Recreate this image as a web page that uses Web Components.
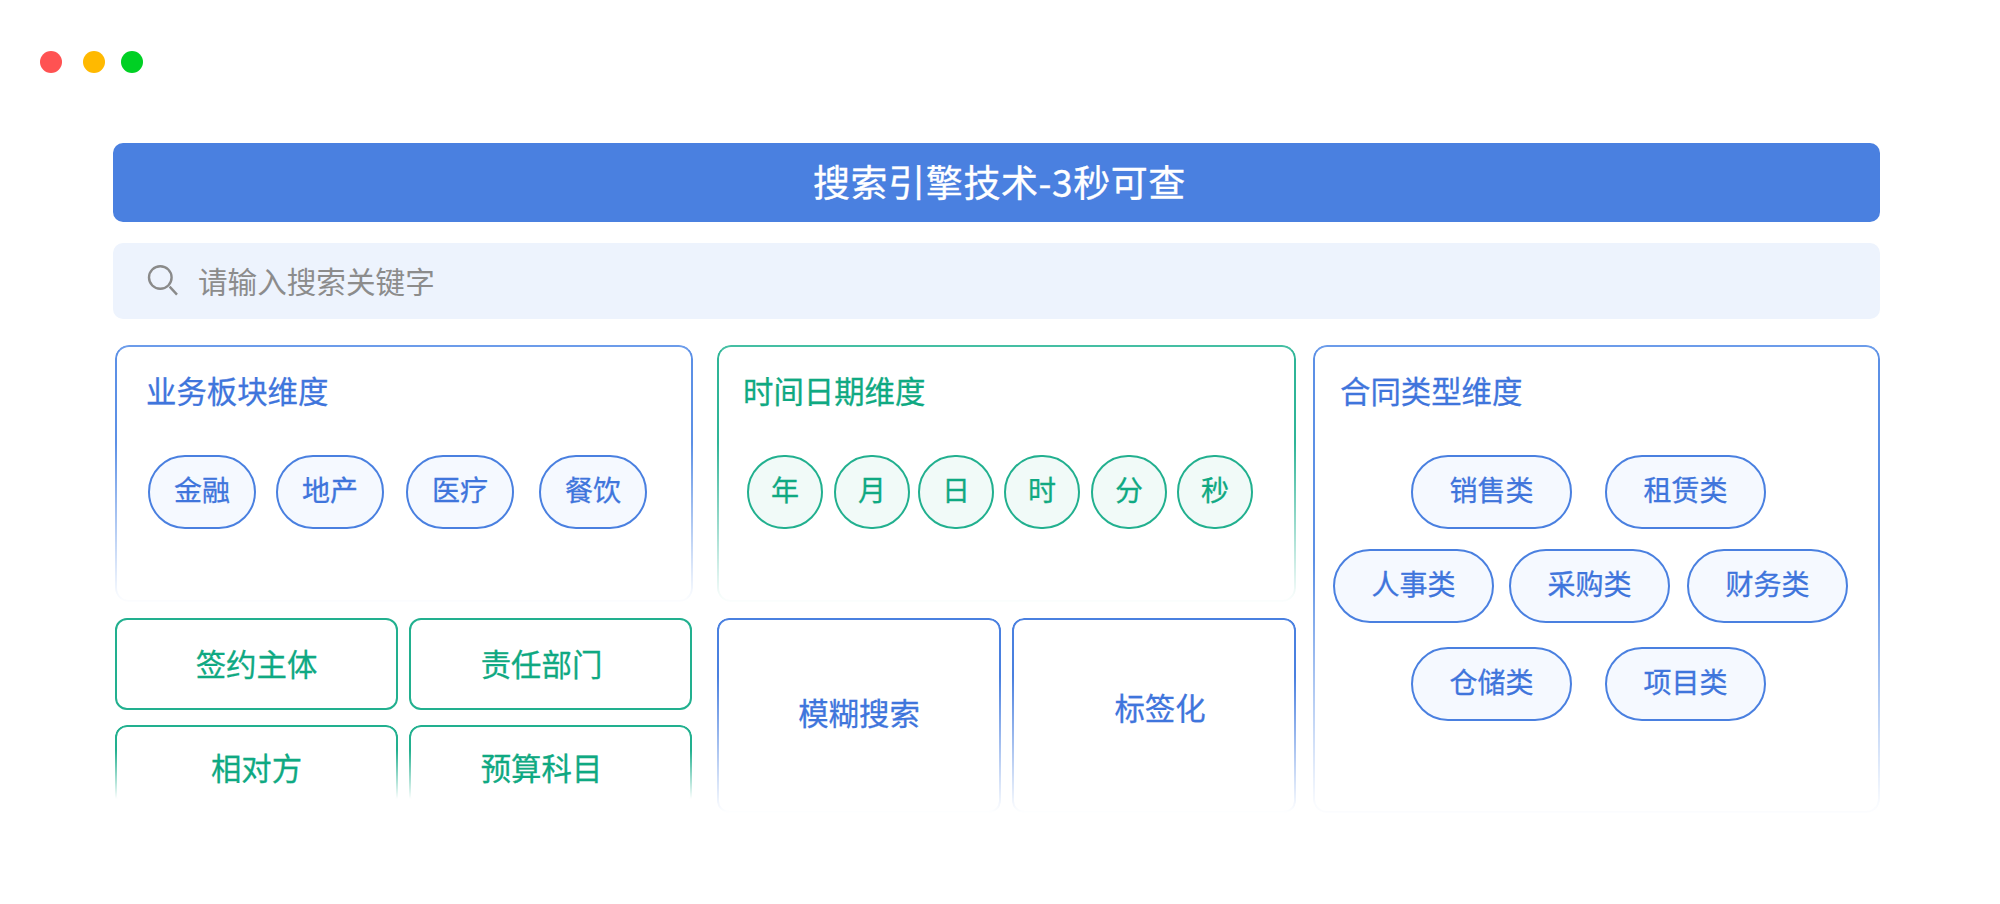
<!DOCTYPE html>
<html lang="zh">
<head>
<meta charset="utf-8">
<title>搜索引擎技术</title>
<style>
  html, body { margin: 0; background: #fff; }
  body {
    font-family: "Noto Sans CJK SC", "Noto Sans", sans-serif;
    width: 2000px;
    height: 904px;
    overflow: hidden;
  }
</style>
</head>
<body>

<search-page>
  <window-dots slot="dots"></window-dots>
  <title-bar slot="bar">搜索引擎技术-3秒可查</title-bar>
  <search-box slot="search">请输入搜索关键字</search-box>

  <dim-card slot="a" style="width:578px;height:257px;--pad:33px" heading="业务板块维度" tone="blue" head-left="31">
    <pill-row style="gap:20px">
      <tag-pill>金融</tag-pill>
      <tag-pill style="margin-right:2px">地产</tag-pill>
      <tag-pill style="margin-right:5px">医疗</tag-pill>
      <tag-pill>餐饮</tag-pill>
    </pill-row>
  </dim-card>
  <link-card slot="a1" tone="green" style="width:283px;height:92px;--pb:2px">签约主体</link-card>
  <link-card slot="a2" tone="green" style="width:283px;height:92px;--pb:2px;--pr:18px">责任部门</link-card>
  <link-card slot="a3" tone="green" fade style="width:283px;height:84px">相对方</link-card>
  <link-card slot="a4" tone="green" fade style="width:283px;height:84px;--pr:18px">预算科目</link-card>

  <dim-card slot="b" style="width:579px;height:257px;--pad:30px" heading="时间日期维度" tone="green" head-left="26">
    <pill-row>
      <tag-pill tone="green" round style="margin-right:11px">年</tag-pill>
      <tag-pill tone="green" round style="margin-right:8px">月</tag-pill>
      <tag-pill tone="green" round style="margin-right:10px">日</tag-pill>
      <tag-pill tone="green" round style="margin-right:11px">时</tag-pill>
      <tag-pill tone="green" round style="margin-right:10px">分</tag-pill>
      <tag-pill tone="green" round>秒</tag-pill>
    </pill-row>
  </dim-card>
  <link-card slot="b1" tone="blue" fade style="width:284px;height:195px;--pb:7px">模糊搜索</link-card>
  <link-card slot="b2" tone="blue" fade style="width:284px;height:195px;--pb:17px;--pl:12px">标签化</link-card>

  <dim-card slot="c" style="width:567px;height:468px;--pad:20px" heading="合同类型维度" tone="blue" head-left="27" slow>
    <pill-row style="gap:33px;margin-left:78px">
      <tag-pill wide>销售类</tag-pill>
      <tag-pill wide>租赁类</tag-pill>
    </pill-row>
    <pill-row style="margin-top:20px">
      <tag-pill wide style="margin-right:15px">人事类</tag-pill>
      <tag-pill wide style="margin-right:17px">采购类</tag-pill>
      <tag-pill wide>财务类</tag-pill>
    </pill-row>
    <pill-row style="gap:33px;margin-top:24px;margin-left:78px">
      <tag-pill wide>仓储类</tag-pill>
      <tag-pill wide>项目类</tag-pill>
    </pill-row>
  </dim-card>
</search-page>

<script>
// shared colours, picked off the reference
const tones = {
  blue: { ink: '#3f75dc', line: '#4a80e0', side: '#5c90e6', top: '#6c9cea', fill: '#f5f9ff' },
  green: { ink: '#0fa982', line: '#22b08f', side: '#2fb597', top: '#45bfa3', fill: '#f1faf8' }
};

function applyTone(el) {
  let t = tones[el.getAttribute('tone')] || tones.blue;
  el.style.setProperty('--ink', t.ink);
  el.style.setProperty('--line', t.line);
  el.style.setProperty('--side', t.side);
  el.style.setProperty('--top', t.top);
  el.style.setProperty('--fill', t.fill);
}

class SearchPage extends HTMLElement {
  connectedCallback() {
    this.attachShadow({ mode: 'open' }).innerHTML = `
      <style>
        :host { display: block; padding: 51px 120px 0 40px; }
        .main { margin: 70px 0 0 73px; width: 1767px; }
        .cols { display: flex; margin: 26px 0 0 2px; }
        .col { display: flex; flex-direction: column; }
        .two { display: flex; gap: 11px; margin-top: 16px; }
        .two.next { margin-top: 15px; }
        .b { margin-left: 24px; }
        .c { margin-left: 17px; }
      </style>
      <slot name="dots"></slot>
      <div class="main">
        <slot name="bar"></slot>
        <slot name="search"></slot>
        <div class="cols">
          <div class="col">
            <slot name="a"></slot>
            <div class="two"><slot name="a1"></slot><slot name="a2"></slot></div>
            <div class="two next"><slot name="a3"></slot><slot name="a4"></slot></div>
          </div>
          <div class="col b">
            <slot name="b"></slot>
            <div class="two"><slot name="b1"></slot><slot name="b2"></slot></div>
          </div>
          <div class="col c"><slot name="c"></slot></div>
        </div>
      </div>`;
  }
}

class WindowDots extends HTMLElement {
  connectedCallback() {
    this.attachShadow({ mode: 'open' }).innerHTML = `
      <style>
        :host { display: flex; height: 22px; }
        i { display: block; width: 22px; height: 22px; border-radius: 50%; }
        .r { background: #ff5252; margin-right: 21px; }
        .y { background: #ffb900; margin-right: 16px; }
        .g { background: #00d024; }
      </style>
      <i class="r"></i><i class="y"></i><i class="g"></i>`;
  }
}

class TitleBar extends HTMLElement {
  connectedCallback() {
    this.attachShadow({ mode: 'open' }).innerHTML = `
      <style>
        :host {
          display: flex; align-items: center; justify-content: center;
          box-sizing: border-box; height: 79px; padding: 0 0 3px 6px; border-radius: 10px;
          background: #4a80e0; color: #fff;
          font-size: 37px; letter-spacing: 0.6px; -webkit-text-stroke: 0.35px #fff;
        }
      </style>
      <slot></slot>`;
  }
}

class SearchBox extends HTMLElement {
  connectedCallback() {
    this.attachShadow({ mode: 'open' }).innerHTML = `
      <style>
        :host {
          display: flex; align-items: center;
          height: 76px; margin-top: 21px; padding-left: 34px;
          border-radius: 10px; background: #edf3fd;
          color: #8c8c8c; font-size: 29.6px;
        }
        svg { width: 32px; height: 32px; margin-right: 19px; flex: none; }
        span { position: relative; top: -1px; }
      </style>
      <svg viewBox="0 0 32 32" fill="none" stroke="#8a8a8a" stroke-width="2.4">
        <circle cx="13.3" cy="12.5" r="11.3"/>
        <path d="M22.6 21.6 L30 29.6"/>
      </svg>
      <span><slot></slot></span>`;
  }
}

class DimCard extends HTMLElement {
  connectedCallback() {
    applyTone(this);
    let headLeft = this.getAttribute('head-left') || 30;
    let heading = this.getAttribute('heading') || '';
    let stop = this.hasAttribute('slow') ? '46%' : '38%';
    let fade = `linear-gradient(#000 0, #000 ${stop}, rgba(0,0,0,.04) 98%, rgba(0,0,0,.02) 100%)`;
    this.attachShadow({ mode: 'open' }).innerHTML = `
      <style>
        :host { display: block; position: relative; box-sizing: border-box; flex: none; }
        .edge {
          position: absolute; inset: 0; box-sizing: border-box; pointer-events: none;
          border: 2px solid var(--side); border-top-color: var(--top); border-radius: 14px;
          -webkit-mask-image: ${fade};
          mask-image: ${fade};
        }
        h2 {
          margin: 0; padding: 24px 0 0 ${headLeft}px; height: 84px; box-sizing: border-box;
          font-size: 30.4px; line-height: 42px; font-weight: 400; -webkit-text-stroke: 0.3px var(--ink);
          color: var(--ink);
        }
        .body { padding: 26px 0 0 var(--pad); }
      </style>
      <div class="edge"></div>
      <h2>${heading}</h2>
      <div class="body"><slot></slot></div>`;
  }
}

class PillRow extends HTMLElement {
  connectedCallback() {
    this.attachShadow({ mode: 'open' }).innerHTML = `
      <style>:host { display: flex; }</style>
      <slot></slot>`;
  }
}

class TagPill extends HTMLElement {
  connectedCallback() {
    applyTone(this);
    let w = this.hasAttribute('round') ? 76 : this.hasAttribute('wide') ? 161 : 108;
    this.attachShadow({ mode: 'open' }).innerHTML = `
      <style>
        :host {
          display: flex; align-items: center; justify-content: center; flex: none;
          box-sizing: border-box; width: ${w}px; height: 74px; padding-bottom: 6px;
          border: 2px solid var(--line); border-radius: 37px / 37px;
          background: var(--fill); color: var(--ink);
          font-size: 28px; line-height: 40px; -webkit-text-stroke: 0.3px var(--ink);
        }
      </style>
      <slot></slot>`;
  }
}

class LinkCard extends HTMLElement {
  connectedCallback() {
    applyTone(this);
    let end = this.getAttribute('tone') == 'green' ? '88%' : '100%';
    let fade = `linear-gradient(#000 0, #000 30%, transparent ${end})`;
    let mask = this.hasAttribute('fade') ? `mask-image: ${fade}; -webkit-mask-image: ${fade};` : '';
    this.attachShadow({ mode: 'open' }).innerHTML = `
      <style>
        :host {
          display: flex; align-items: center; justify-content: center; flex: none;
          position: relative; box-sizing: border-box;
          padding-bottom: var(--pb, 0); padding-left: var(--pl, 0); padding-right: var(--pr, 0);
          color: var(--ink); font-size: 30.4px; line-height: 42px; -webkit-text-stroke: 0.3px var(--ink);
        }
        .edge {
          position: absolute; inset: 0; box-sizing: border-box;
          border: 2px solid var(--line); border-radius: 12px; ${mask}
        }
      </style>
      <div class="edge"></div>
      <slot></slot>`;
  }
}

customElements.define('search-page', SearchPage);
customElements.define('window-dots', WindowDots);
customElements.define('title-bar', TitleBar);
customElements.define('search-box', SearchBox);
customElements.define('dim-card', DimCard);
customElements.define('pill-row', PillRow);
customElements.define('tag-pill', TagPill);
customElements.define('link-card', LinkCard);
</script>
</body>
</html>
